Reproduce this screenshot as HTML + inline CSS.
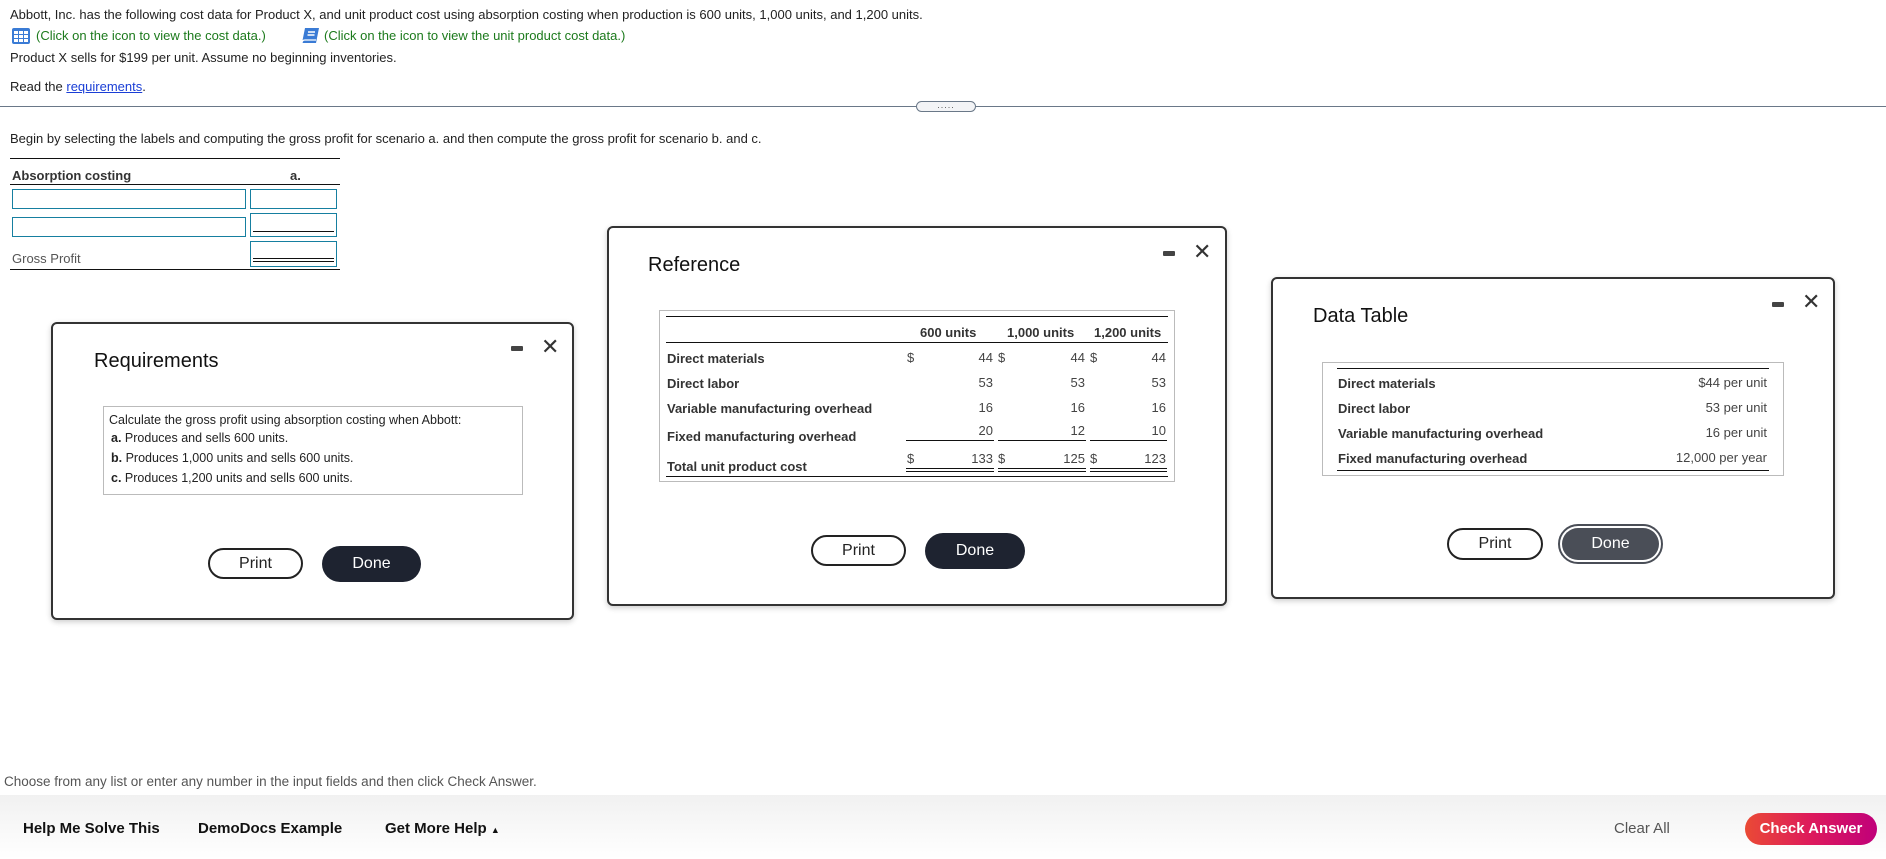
<!DOCTYPE html>
<html><head><meta charset="utf-8"><style>
*{box-sizing:border-box;margin:0;padding:0}
body{width:1886px;height:859px;position:relative;overflow:hidden;background:#fff;font-family:"Liberation Sans",Arial,sans-serif;color:#222;font-size:13px}
.a{position:absolute;white-space:nowrap}
.g{color:#1c7a1c}
.dlg{position:absolute;border:2px solid #333;border-radius:6px;background:#fff;box-shadow:0 2px 6px rgba(0,0,0,.2)}
.ttl{position:absolute;font-size:20px;color:#111}
.mn{position:absolute;width:12px;height:5px;background:#444;border-radius:1px}
.x{position:absolute;font-size:22px;color:#333;line-height:1}
.btnp{position:absolute;border:2px solid #222;border-radius:16px;background:#fff;font-size:16px;text-align:center;color:#222}
.btnd{position:absolute;border-radius:18px;background:#1e2330;color:#fff;font-size:16px;text-align:center}
.ln{position:absolute;background:#111;height:2px}
.tb{font-weight:bold;color:#333;font-size:13px}
.r{text-align:right}
.ib{position:absolute;border:1px solid #167fa0}
</style></head><body>
<div class="a" style="left:10px;top:7px">Abbott, Inc. has the following cost data for Product X, and unit product cost using absorption costing when production is 600 units, 1,000 units, and 1,200 units.</div>
<svg class="a" style="left:12px;top:28px" width="18" height="16" viewBox="0 0 18 16"><rect x="0" y="0" width="18" height="16" rx="2" fill="#3a7bd5"/><g fill="#fff"><rect x="2" y="3" width="4" height="3"/><rect x="7" y="3" width="4" height="3"/><rect x="12" y="3" width="4" height="3"/><rect x="2" y="7" width="4" height="3"/><rect x="7" y="7" width="4" height="3"/><rect x="12" y="7" width="4" height="3"/><rect x="2" y="11" width="4" height="3"/><rect x="7" y="11" width="4" height="3"/><rect x="12" y="11" width="4" height="3"/></g></svg>
<div class="a g" style="left:36px;top:28px">(Click on the icon to view the cost data.)</div>
<svg class="a" style="left:300px;top:27px" width="20" height="18" viewBox="0 0 20 18"><path d="M5 1h14l-3 15H2z" fill="#3a7bd5"/><path d="M2 16c0-2 1-3 3-3h11" stroke="#fff" stroke-width="1.3" fill="none"/><path d="M8 5h7M7.5 8h7" stroke="#fff" stroke-width="1.5"/></svg>
<div class="a g" style="left:324px;top:28px">(Click on the icon to view the unit product cost data.)</div>
<div class="a" style="left:10px;top:50px">Product X sells for $199 per unit. Assume no beginning inventories.</div>
<div class="a" style="left:10px;top:79px">Read the <span style="color:#1a3ed6;text-decoration:underline">requirements</span>.</div>
<div class="a" style="left:0;top:106px;width:1886px;height:1px;background:#6a7888"></div>
<div class="a" style="left:916px;top:101px;width:60px;height:11px;border:1px solid #6a7888;border-radius:6px;background:#f3f4f6;text-align:center;font-size:9px;line-height:6px;letter-spacing:1px;color:#555">.....</div>
<div class="a" style="left:10px;top:131px">Begin by selecting the labels and computing the gross profit for scenario a. and then compute the gross profit for scenario b. and c.</div>

<div class="ln" style="left:10px;top:158px;width:330px;height:1px"></div>
<div class="a tb" style="left:12px;top:168px">Absorption costing</div>
<div class="a tb" style="left:290px;top:168px">a.</div>
<div class="ln" style="left:10px;top:184px;width:330px;height:1px"></div>
<div class="ib" style="left:12px;top:189px;width:234px;height:20px"></div>
<div class="ib" style="left:250px;top:189px;width:87px;height:20px"></div>
<div class="ib" style="left:12px;top:217px;width:234px;height:20px"></div>
<div class="ib" style="left:250px;top:213px;width:87px;height:24px"></div>
<div class="ln" style="left:253px;top:231px;width:81px;height:1px"></div>
<div class="a" style="left:12px;top:251px;color:#555">Gross Profit</div>
<div class="ib" style="left:250px;top:241px;width:87px;height:26px"></div>
<div class="ln" style="left:253px;top:258px;width:81px;height:1px"></div>
<div class="ln" style="left:253px;top:261px;width:81px;height:1px"></div>
<div class="ln" style="left:10px;top:269px;width:330px;height:1px"></div>

<!-- Requirements -->
<div class="dlg" style="left:51px;top:322px;width:523px;height:298px"></div>
<div class="ttl" style="left:94px;top:350px">Requirements</div>
<div class="mn" style="left:511px;top:346px"></div>
<div class="x" style="left:541px;top:336px">✕</div>
<div class="a" style="left:103px;top:406px;width:420px;height:89px;border:1px solid #bbb"></div>
<div class="a" style="left:109px;top:413px;font-size:12.5px">Calculate the gross profit using absorption costing when Abbott:</div>
<div class="a" style="left:111px;top:431px;font-size:12.5px"><b>a.</b> Produces and sells 600 units.</div>
<div class="a" style="left:111px;top:451px;font-size:12.5px"><b>b.</b> Produces 1,000 units and sells 600 units.</div>
<div class="a" style="left:111px;top:471px;font-size:12.5px"><b>c.</b> Produces 1,200 units and sells 600 units.</div>
<div class="btnp" style="left:208px;top:548px;width:95px;height:31px;line-height:27px">Print</div>
<div class="btnd" style="left:322px;top:546px;width:99px;height:36px;line-height:36px">Done</div>

<!-- Reference -->
<div class="dlg" style="left:607px;top:226px;width:620px;height:380px"></div>
<div class="ttl" style="left:648px;top:254px">Reference</div>
<div class="mn" style="left:1163px;top:251px"></div>
<div class="x" style="left:1193px;top:241px">✕</div>
<div class="a" style="left:659px;top:310px;width:516px;height:172px;border:1px solid #bbb"></div>
<div class="ln" style="left:666px;top:316px;width:502px;height:1px"></div>
<div class="a tb" style="left:920px;top:325px">600 units</div>
<div class="a tb" style="left:1007px;top:325px">1,000 units</div>
<div class="a tb" style="left:1094px;top:325px">1,200 units</div>
<div class="ln" style="left:666px;top:342px;width:502px;height:1px"></div>
<div class="a tb" style="left:667px;top:351px">Direct materials</div>
<div class="a tb" style="left:667px;top:376px">Direct labor</div>
<div class="a tb" style="left:667px;top:401px">Variable manufacturing overhead</div>
<div class="a tb" style="left:667px;top:429px">Fixed manufacturing overhead</div>
<div class="a tb" style="left:667px;top:459px">Total unit product cost</div>
<div class="a" style="left:907px;top:350px;color:#444">$</div>
<div class="a" style="left:998px;top:350px;color:#444">$</div>
<div class="a" style="left:1090px;top:350px;color:#444">$</div>
<div class="a" style="left:907px;top:451px;color:#444">$</div>
<div class="a" style="left:998px;top:451px;color:#444">$</div>
<div class="a" style="left:1090px;top:451px;color:#444">$</div>
<div class="a r" style="left:940px;width:53px;top:345px;color:#444;line-height:25px">44<br>53<br>16</div>
<div class="a r" style="left:1032px;width:53px;top:345px;color:#444;line-height:25px">44<br>53<br>16</div>
<div class="a r" style="left:1113px;width:53px;top:345px;color:#444;line-height:25px">44<br>53<br>16</div>
<div class="a r" style="left:940px;width:53px;top:423px;color:#444">20</div>
<div class="a r" style="left:1032px;width:53px;top:423px;color:#444">12</div>
<div class="a r" style="left:1113px;width:53px;top:423px;color:#444">10</div>
<div class="a r" style="left:940px;width:53px;top:451px;color:#444">133</div>
<div class="a r" style="left:1032px;width:53px;top:451px;color:#444">125</div>
<div class="a r" style="left:1113px;width:53px;top:451px;color:#444">123</div>
<div class="ln" style="left:906px;top:440px;width:88px;height:1px"></div>
<div class="ln" style="left:998px;top:440px;width:88px;height:1px"></div>
<div class="ln" style="left:1090px;top:440px;width:77px;height:1px"></div>
<div class="ln" style="left:906px;top:468px;width:88px;height:1px"></div>
<div class="ln" style="left:998px;top:468px;width:88px;height:1px"></div>
<div class="ln" style="left:1090px;top:468px;width:77px;height:1px"></div>
<div class="ln" style="left:906px;top:471px;width:88px;height:1px"></div>
<div class="ln" style="left:998px;top:471px;width:88px;height:1px"></div>
<div class="ln" style="left:1090px;top:471px;width:77px;height:1px"></div>
<div class="ln" style="left:666px;top:476px;width:502px;height:1px"></div>
<div class="btnp" style="left:811px;top:535px;width:95px;height:31px;line-height:27px">Print</div>
<div class="btnd" style="left:925px;top:533px;width:100px;height:36px;line-height:36px">Done</div>

<!-- Data table -->
<div class="dlg" style="left:1271px;top:277px;width:564px;height:322px"></div>
<div class="ttl" style="left:1313px;top:305px">Data Table</div>
<div class="mn" style="left:1772px;top:302px"></div>
<div class="x" style="left:1802px;top:291px">✕</div>
<div class="a" style="left:1322px;top:362px;width:462px;height:114px;border:1px solid #bbb"></div>
<div class="ln" style="left:1337px;top:368px;width:432px;height:1px"></div>
<div class="a tb" style="left:1338px;top:371px;line-height:25px">Direct materials<br>Direct labor<br>Variable manufacturing overhead<br>Fixed manufacturing overhead</div>
<div class="a r" style="left:1600px;width:167px;top:370px;line-height:25px;color:#444">$44 per unit<br>53 per unit<br>16 per unit<br>12,000 per year</div>
<div class="ln" style="left:1337px;top:470px;width:432px;height:1px"></div>
<div class="btnp" style="left:1447px;top:528px;width:96px;height:32px;line-height:28px">Print</div>
<div class="a" style="left:1558px;top:524px;width:105px;height:40px;border-radius:20px;border:2px solid #4a4e57;padding:2px"><div style="width:100%;height:100%;border-radius:16px;background:#4a4e57;color:#fff;font-size:16px;text-align:center;line-height:32px">Done</div></div>

<div class="a" style="left:4px;top:774px;color:#555;font-size:13.5px">Choose from any list or enter any number in the input fields and then click Check Answer.</div>
<div class="a" style="left:0;top:795px;width:1886px;height:64px;background:linear-gradient(#f1f1f1,#fff)"></div>
<div class="a" style="left:23px;top:820px;font-weight:bold;font-size:15px;color:#111">Help Me Solve This</div>
<div class="a" style="left:198px;top:820px;font-weight:bold;font-size:15px;color:#111">DemoDocs Example</div>
<div class="a" style="left:385px;top:820px;font-weight:bold;font-size:15px;color:#111">Get More Help <span style="font-size:9px">▲</span></div>
<div class="a" style="left:1614px;top:820px;font-size:15px;color:#555">Clear All</div>
<div class="a" style="left:1745px;top:813px;width:132px;height:32px;border-radius:16px;background:linear-gradient(90deg,#ea4a35,#dd1a5c 50%,#c0007a);color:#fff;font-weight:bold;font-size:15px;text-align:center;line-height:32px">Check Answer</div>
</body></html>
